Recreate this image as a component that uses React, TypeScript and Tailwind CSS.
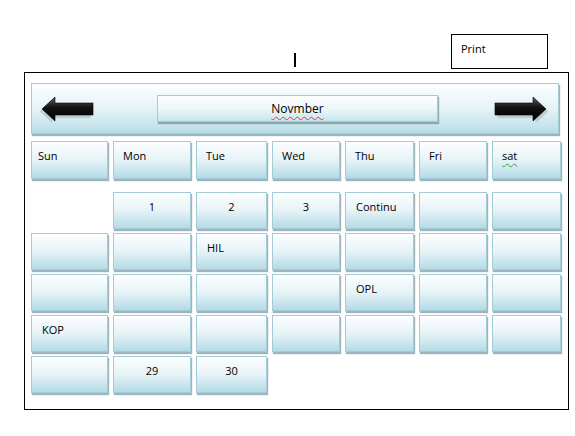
import React from "react";

type Cell = { text?: string; center?: boolean } | null;

const days = ["Sun", "Mon", "Tue", "Wed", "Thu", "Fri", "sat"];

const rows: Cell[][] = [
  [null, { text: "1", center: true }, { text: "2", center: true }, { text: "3", center: true }, { text: "Continu" }, {}, {}],
  [{}, {}, { text: "HIL" }, {}, {}, {}, {}],
  [{}, {}, {}, {}, { text: "OPL" }, {}, {}],
  [{ text: "KOP" }, {}, {}, {}, {}, {}, {}],
  [{}, { text: "29", center: true }, { text: "30", center: true }, null, null, null, null],
];

const box =
  "border border-[#a3ccd7] bg-gradient-to-b from-[#fdfeff] via-[#e6f3f7] to-[#b4dbe6] shadow-[1px_2px_1px_rgba(80,120,135,0.55)]";

const Arrow = ({ right }: { right?: boolean }) => (
  <svg width="56" height="28" viewBox="0 0 56 28" className={right ? "" : "-scale-x-100"}>
    <defs>
      <linearGradient id={right ? "ar" : "al"} x1="0" y1="0" x2="0" y2="1">
        <stop offset="0" stopColor="#5a5a5a" />
        <stop offset="0.45" stopColor="#111" />
        <stop offset="1" stopColor="#000" />
      </linearGradient>
    </defs>
    <path d="M2 8.5 H40 V2.5 L53 14 L40 25.5 V20.5 H2 Z" fill="#9aa" opacity="0.45" transform="translate(1.5 1.5)" />
    <path d="M1 7 H39 V1 L52 13 L39 25 V19 H1 Z" fill={`url(#${right ? "ar" : "al"})`} stroke="#000" strokeWidth="0.6" />
  </svg>
);

export default function App() {
  return (
    <div className="w-[575px] h-[436px] bg-white font-['Open_Sans',sans-serif] text-[11px] text-black">
      <div className="h-[72px] flex items-start">
        <div className="ml-[294px] mt-[53px] w-[2px] h-[14px] bg-black" />
        <div className="ml-[155px] mt-[34px] w-[97px] h-[35px] border border-black pl-[9px] pt-[6px]">Print</div>
      </div>
      <div className="ml-[24px] w-[545px] h-[338px] border border-black pl-[6px] pt-[10px]">
        <div className={`w-[528px] h-[51px] flex items-center ${box} bg-gradient-to-b from-[#fbfdfe] via-[#ddeff4] to-[#b9dde7]`}>
          <div className="ml-[6px] mt-[2px] flex">
            <Arrow />
          </div>
          <div
            className={`ml-[63px] w-[281px] h-[27px] flex items-center justify-center text-[12px] ${box} from-[#fdfeff] via-[#eef7f9] to-[#c6e5ee]`}
          >
            <span className="underline decoration-wavy decoration-[#e33] decoration-1 underline-offset-[3px]">Novmber</span>
          </div>
          <div className="ml-[56px] mt-[2px] flex">
            <Arrow right />
          </div>
        </div>
        <div className="mt-[7px] grid grid-cols-[77px_78px_71px_68px_69px_68px_69px] gap-x-[5px]">
          {days.map((d, i) => (
            <div key={d} className={`h-[38px] ${box} ${i === 0 ? "pl-[6px]" : "pl-[9px]"} pt-[6px]`}>
              {d === "sat" ? (
                <span className="underline decoration-wavy decoration-[#3a3] decoration-1 underline-offset-[3px]">sat</span>
              ) : (
                d
              )}
            </div>
          ))}
        </div>
        <div className="mt-[13px] grid grid-cols-[77px_78px_71px_68px_69px_68px_69px] gap-x-[5px] gap-y-[4px]">
          {rows.map((r, ri) =>
            r.map((c, ci) =>
              c ? (
                <div
                  key={`${ri}-${ci}`}
                  className={`h-[37px] ${box} pt-[6px] ${c.center ? "text-center" : "pl-[10px]"}`}
                >
                  {c.text}
                </div>
              ) : (
                <div key={`${ri}-${ci}`} className="h-[37px]" />
              )
            )
          )}
        </div>
      </div>
    </div>
  );
}
